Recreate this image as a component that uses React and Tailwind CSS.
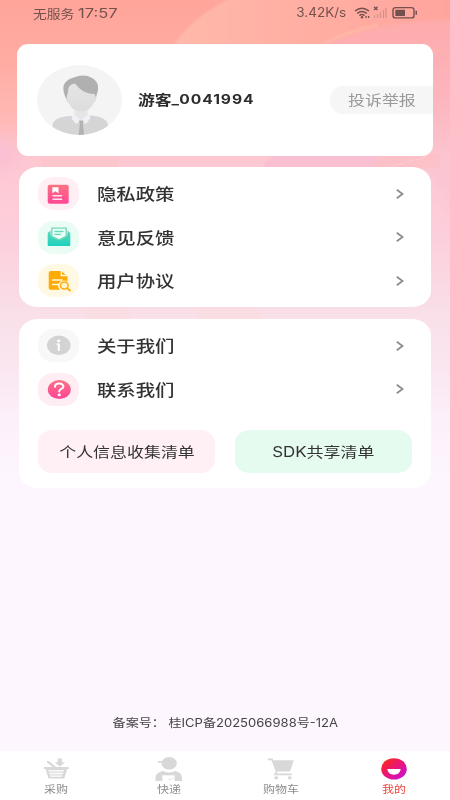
import React from 'react';

const menuTop = [
  { label: '隐私政策', icon: 'book', bubble: 'bg-[#ffeff5]' },
  { label: '意见反馈', icon: 'mail', bubble: 'bg-[#ebfcf4]' },
  { label: '用户协议', icon: 'doc', bubble: 'bg-[#fff9e4]' },
];

const menuBottom = [
  { label: '关于我们', icon: 'info', bubble: 'bg-[#f8f8f8]' },
  { label: '联系我们', icon: 'help', bubble: 'bg-[#ffedf4]' },
];

const tabs = [
  { label: '采购', icon: 'basket' },
  { label: '快递', icon: 'courier' },
  { label: '购物车', icon: 'cart' },
  { label: '我的', icon: 'mine', active: true },
];

const Backdrop = () => (
  <svg className="absolute inset-0 -z-10 h-full w-full" viewBox="0 0 450 800" preserveAspectRatio="none">
    <defs>
      <linearGradient id="sky" x1="0" y1="0" x2="0" y2="1">
        <stop offset="0" stopColor="#ffa59a" />
        <stop offset="0.08" stopColor="#ffaca3" />
        <stop offset="0.15" stopColor="#ffb9b6" />
        <stop offset="0.2" stopColor="#fec8d2" />
        <stop offset="0.3" stopColor="#fccfdc" />
        <stop offset="0.39" stopColor="#f9dfe8" />
        <stop offset="0.46" stopColor="#fae6f0" />
        <stop offset="0.53" stopColor="#fcf1fb" />
        <stop offset="0.6" stopColor="#fdf6ff" />
        <stop offset="1" stopColor="#fdf6ff" />
      </linearGradient>
      <linearGradient id="arc" x1="0" y1="0" x2="1" y2="0">
        <stop offset="0" stopColor="#ffb9aa" />
        <stop offset="0.5" stopColor="#ffaea2" />
        <stop offset="1" stopColor="#ffa59e" />
      </linearGradient>
      <linearGradient id="swell" x1="0" y1="0" x2="0" y2="1">
        <stop offset="0" stopColor="#feabab" />
        <stop offset="0.35" stopColor="#fdb5bd" />
        <stop offset="0.65" stopColor="#fcc6d0" />
        <stop offset="1" stopColor="#fcd2dc" stopOpacity="0" />
      </linearGradient>
      <filter id="soft" x="-50%" y="-100%" width="200%" height="300%">
        <feGaussianBlur stdDeviation="7" />
      </filter>
      <filter id="edge" x="-10%" y="-10%" width="120%" height="120%">
        <feGaussianBlur stdDeviation="1.2" />
      </filter>
    </defs>
    <rect width="450" height="800" fill="url(#sky)" />
    <path d="M173 46 Q194 16 232 -3 H455 V46 Z" fill="url(#arc)" filter="url(#edge)" />
    <path d="M322 46 Q375 21 455 19 V240 H322 Z" fill="url(#swell)" filter="url(#edge)" />
    <path d="M322 45 Q345 32 378 25" fill="none" stroke="#ffc3ae" strokeWidth="2.500" opacity="0.600" filter="url(#edge)" />
    <ellipse cx="2" cy="154" rx="15" ry="16" fill="#fbbfd3" filter="url(#soft)" />
    <path d="M40 168 L46 154 H118 V168Z" fill="#fdc6cd" filter="url(#edge)" />
    <path d="M262 168 Q266 160 275 154 H380 V168Z" fill="#fabfd1" filter="url(#edge)" />
    <path d="M374 168 Q378 160 385 154 H440 V168Z" fill="#fdc0c7" filter="url(#edge)" />
    <path d="M392 166 L426 157" stroke="#ffd5d8" strokeWidth="0.700" opacity="0.700" />
    <path d="M436 170 Q443 200 455 225 V160 H436Z" fill="#fbc5d3" filter="url(#soft)" />
    <path d="M80 306 H136 L128 320 H86Z M196 306 H262 V320 H196Z" fill="#fadde0" opacity="0.500" filter="url(#edge)" />
  </svg>
);

const BubbleIcon = ({ name }) => {
  const grad = (id, from, to) => (
    <defs>
      <linearGradient id={id} x1="0" y1="0" x2="0" y2="1">
        <stop offset="0" stopColor={from} />
        <stop offset="1" stopColor={to} />
      </linearGradient>
    </defs>
  );
  if (name === 'book') {
    return (
      <svg className="h-[33px] w-[41px]" viewBox="0 0 41 33">
        {grad('bookFill', '#fb7380', '#ff4796')}
        <rect x="9.700" y="7.700" width="21" height="19" rx="2" fill="url(#bookFill)" />
        <path d="M14.300 10.200h6.200v6l-3.100-2-3.100 2z" fill="#fff" />
        <path d="M15 18.800h8.600M15 22.300h8.600" stroke="#ffe3ec" strokeWidth="1.400" strokeLinecap="round" />
      </svg>
    );
  }
  if (name === 'mail') {
    return (
      <svg className="h-[33px] w-[41px]" viewBox="0 0 41 33">
        {grad('mailFill', '#5fd9b8', '#1dd0bf')}
        <path d="M9.700 12 12.600 9.500v4l8.400 4.500 8.400-4.500v-4l2.900 2.500v12.200q0 .8-.8.8H10.500q-.8 0-.8-.8z" fill="url(#mailFill)" />
        <path d="M13.800 7.200h14.400v8.200L21 18.800l-7.200-3.400z" fill="#eafff8" stroke="#74d9b8" strokeWidth="1.300" />
        <path d="M17 10.500h8M17 13.400h5.500" stroke="#67d9ba" strokeWidth="1.300" strokeLinecap="round" />
      </svg>
    );
  }
  if (name === 'doc') {
    return (
      <svg className="h-[33px] w-[41px]" viewBox="0 0 41 33">
        <path d="M12.700 7h10.500l6.300 5.200V24q0 1.800-2 1.800H12.700q-2 0-2-1.800V9q0-2 2-2z" fill="#feac05" />
        <path d="M23.300 6.500v5h6.500" fill="none" stroke="#fff8e2" strokeWidth="1.300" />
        <path d="M14.800 16h9M14.800 20.500h5.500" stroke="#fff8e2" strokeWidth="1.700" strokeLinecap="round" />
        <ellipse cx="26" cy="21.800" rx="6" ry="5.200" fill="#fff8e2" />
        <ellipse cx="26.300" cy="21.500" rx="3.900" ry="3.400" fill="#fff3cf" stroke="#feac05" strokeWidth="1.500" />
        <path d="m29.200 24.200 2.900 2.300" stroke="#feac05" strokeWidth="1.800" strokeLinecap="round" />
      </svg>
    );
  }
  if (name === 'info') {
    return (
      <svg className="h-[33px] w-[41px]" viewBox="0 0 41 33">
        <ellipse cx="20.800" cy="16.300" rx="11.800" ry="9.700" fill="#d3d3d3" />
        <ellipse cx="20.700" cy="11.900" rx="1.600" ry="1.300" fill="#fff" />
        <path d="M19.600 15.300h1.200v5.800" fill="none" stroke="#fff" strokeWidth="2.200" strokeLinecap="round" strokeLinejoin="round" />
      </svg>
    );
  }
  return (
    <svg className="h-[33px] w-[41px]" viewBox="0 0 41 33">
      {grad('helpFill', '#fa7284', '#ff4499')}
      <ellipse cx="21.300" cy="16.600" rx="11.500" ry="9.500" fill="url(#helpFill)" />
      <path d="M17 13.800c.2-4.400 8.600-4.200 8.400-.2-.1 2.500-4.200 2.200-4.200 4.800" fill="none" stroke="#fff" strokeWidth="2" strokeLinecap="round" />
      <ellipse cx="21.200" cy="21.900" rx="1.600" ry="1.300" fill="#fff" />
    </svg>
  );
};

const TabIcon = ({ name }) => {
  if (name === 'basket') {
    return (
      <svg className="h-6 w-7" viewBox="0 0 28 24">
        <path d="M6 4.800 13 10.500" stroke="#d8d8d8" strokeWidth="2.200" strokeLinecap="round" />
        <path d="M15.700 1.500h4.200v3.800H23L17.800 9.500l-5.200-4.200h3.100z" fill="#d8d8d8" />
        <path d="M1.800 10h25v2h-1.600L22.300 21.500H6.500L3.500 12H1.800z" fill="#d8d8d8" />
        <path d="M6.500 13.800h15.500M7.500 16.500h13.500M8.300 19.100h11.800" stroke="#fff" strokeWidth="1.300" />
      </svg>
    );
  }
  if (name === 'courier') {
    return (
      <svg className="h-6 w-7" viewBox="0 0 28 24">
        <ellipse cx="14.200" cy="6.300" rx="7.600" ry="6.300" fill="#d8d8d8" />
        <path d="M2.700 4h6v1.800h-5q-1 0-1-1.800z" fill="#d8d8d8" />
        <path d="M.5 24v-3.500q0-5 7.500-6.500 6 3.200 12 0 7 1.500 7 6.500V24z" fill="#d8d8d8" />
        <path d="M7.300 18.300h12.400V24H7.300z" fill="#fff" />
        <path d="M13.800 22.700h2.500M17.500 21.300h1" stroke="#d8d8d8" strokeWidth="1" />
      </svg>
    );
  }
  if (name === 'cart') {
    return (
      <svg className="h-6 w-7" viewBox="0 0 28 24">
        <path d="M.8 2.400h4.200L9.700 14.800 8 17.400h16.500" fill="none" stroke="#d8d8d8" strokeWidth="1.700" />
        <path d="M6 3.300H26.800l-3.500 10.400Q22.900 14.600 21.500 14.600H10z" fill="#d8d8d8" />
        <ellipse cx="9.200" cy="20.800" rx="2" ry="1.600" fill="#d8d8d8" />
        <ellipse cx="22.700" cy="20.800" rx="2" ry="1.600" fill="#d8d8d8" />
      </svg>
    );
  }
  return (
    <svg className="h-6 w-7" viewBox="0 0 28 24">
      <defs>
        <linearGradient id="mineFill" x1="0.100" y1="0.100" x2="0.900" y2="0.900">
          <stop offset="0" stopColor="#fb2a1c" />
          <stop offset="0.500" stopColor="#ea157a" />
          <stop offset="1" stopColor="#c912cf" />
        </linearGradient>
      </defs>
      <ellipse cx="14" cy="11.900" rx="12.800" ry="10.700" fill="url(#mineFill)" />
      <path d="M7.300 12h13.400q-.5 5.700-6.700 5.700T7.300 12z" fill="#fff" />
    </svg>
  );
};

const Avatar = () => (
  <svg className="h-[70px] w-[85px] shrink-0" viewBox="0 0 85 70">
    <defs>
      <clipPath id="avatarClip">
        <ellipse cx="42.500" cy="35" rx="42.500" ry="35" />
      </clipPath>
      <linearGradient id="face" x1="0" y1="0" x2="0" y2="1">
        <stop offset="0" stopColor="#e5e5e5" />
        <stop offset="1" stopColor="#dcdcdc" />
      </linearGradient>
    </defs>
    <g clipPath="url(#avatarClip)">
      <rect width="85" height="70" fill="#f4f4f4" />
      <path d="M15.500 70V60q1-8 18-9l10 2 11-2.500Q70 52 71 60v10z" fill="#d5d5d5" />
      <path d="M37.500 44h13v6l-6.500 6-6.500-6z" fill="#e6e6e6" />
      <path d="M36.500 49.500l7.500 5.500 7.500-5.500 2 3.500-4.500 6-5-3.500-5 3.500-4.500-5.500z" fill="#f0f0f7" />
      <path d="M42 55.500h4.500l-.7 3 1.300 11.500h-5.500l1.300-11.500z" fill="#b2b2b2" />
      <path d="M30 31q-2 0-1 3.500t3 4zM58 31q2 0 1 3.500t-3 4z" fill="#dedede" />
      <path d="M30.500 18H58v16q-3 12-14 12.200Q33 46 30.500 34z" fill="url(#face)" />
      <path d="M29.500 34Q25.500 27 26.500 21q1.500-6 10-8.500 11-4 18.500.5 7 3.500 6 12l-2 7.500-1.500-3.500Q46 29.500 38 18.500q-7 .5-7 8z" fill="#b0b0b0" />
    </g>
  </svg>
);

const MenuRow = ({ item }) => (
  <div className="flex h-[43.500px] items-center">
    <div className={`h-[33px] w-[41px] rounded-[16px/14px] ${item.bubble}`}>
      <BubbleIcon name={item.icon} />
    </div>
    <span className="ml-[17.500px] origin-left scale-x-[1.210] pt-px text-[16px] leading-none font-medium text-[#333]">{item.label}</span>
    <svg className="mr-[27px] ml-auto h-[10px] w-[8px]" viewBox="0 0 8 10">
      <path d="M.8.700 6.600 5 .8 9.300" fill="none" stroke="#8a8a8a" strokeWidth="1.700" />
    </svg>
  </div>
);

const StatusBar = () => (
  <header className="flex h-[26px] items-center pr-[32px] pl-[33px] text-[#75504e]">
    <span className="w-[45px]">
      <span className="inline-block origin-left scale-x-[1.150] text-[12px] leading-none">无服务</span>
    </span>
    <span className="inline-block origin-left scale-x-[1.270] text-[13px] leading-none">17:57</span>
    <span className="ml-auto inline-block origin-right scale-x-[1.080] pt-px text-[12.500px] leading-none">3.42K/s</span>
    <svg className="ml-[8px] h-[14px] w-[64px]" viewBox="0 0 64 14">
      <g fill="none" stroke="currentColor" strokeWidth="1.500">
        <path d="M1 5q7-5.500 14 0M3.200 7.300q4.800-3.700 9.600 0M5.400 9.600q2.600-2 5.200 0" />
        <path d="M20 .8l3.500 3.200M23.500 .8 20 4" strokeWidth="1.300" />
        <rect x="39" y="1.600" width="21" height="10.300" rx="2.500" strokeWidth="1.400" />
      </g>
      <circle cx="8" cy="11.300" r="1.200" fill="currentColor" />
      <path d="M11.500 10h1.300v2h-1.300zM14 10h1.300v2H14zM41.300 3.700h9.700v6.200h-9.700zM61.500 4.800h1.500v4h-1.500z" fill="currentColor" />
      <path d="M20.500 9.500v2.500M23.500 8v4M26.500 6v6M29.500 4v8M32 2v10" stroke="#d08f88" strokeWidth="1.200" />
    </svg>
  </header>
);

const App = () => {
  return (
    <div className="relative isolate flex h-[800px] w-[450px] flex-col overflow-hidden font-['Inter','Noto_Sans_CJK_SC',sans-serif]">
      <Backdrop />
      <StatusBar />

      {/* Profile */}
      <section className="mt-[18px] ml-[17px] flex h-[111.500px] w-[416px] items-center overflow-hidden rounded-[11px] bg-white pl-[20px]">
        <Avatar />
        <span className="ml-[16px] flex origin-left scale-x-[1.200] items-center text-[14px] leading-none font-bold whitespace-nowrap text-[#2d2d2d]">
          游客<span className="text-[13px] tracking-[0.800px]">_0041994</span>
        </span>
        <div className="ml-auto flex h-[28px] w-[103px] shrink-0 items-center rounded-l-[13px] bg-[#f6f6f6] pl-[18px]">
          <span className="origin-left scale-x-[1.210] pt-px text-[14px] leading-none text-[#999]">投诉举报</span>
        </div>
      </section>

      {/* Menus */}
      <section className="mt-[11.500px] ml-[19px] h-[140px] w-[412px] rounded-[19px/16px] bg-white pt-[5px] pl-[19px]">
        {menuTop.map((item) => (
          <MenuRow key={item.label} item={item} />
        ))}
      </section>

      <section className="mt-[12px] ml-[19px] h-[169px] w-[412px] rounded-[19px/16px] bg-white pt-[5px] pl-[19px]">
        {menuBottom.map((item) => (
          <MenuRow key={item.label} item={item} />
        ))}
        <div className="mt-[19px] flex gap-5">
          <button className="flex h-[43px] w-[177px] items-center justify-center rounded-[15px/13px] bg-[#fff0f5]">
            <span className="scale-x-[1.210] text-[14px] leading-none whitespace-nowrap text-[#333]">个人信息收集清单</span>
          </button>
          <button className="flex h-[43px] w-[177px] items-center justify-center rounded-[15px/13px] bg-[#e6fbef]">
            <span className="scale-x-[1.210] text-[14px] leading-none whitespace-nowrap text-[#333]">SDK共享清单</span>
          </button>
        </div>
      </section>

      <p className="mt-auto mb-[21px] text-center text-[11.500px] leading-[14px] text-[#444]">
        <span className="inline-block scale-x-[1.135]">备案号： 桂ICP备2025066988号-12A</span>
      </p>

      {/* Tab bar */}
      <nav className="grid h-[49px] grid-cols-4 bg-white pt-[6px]">
        {tabs.map((tab) => (
          <div key={tab.label} className="flex flex-col items-center">
            <TabIcon name={tab.icon} />
            <span className={`mt-[3px] scale-x-[1.200] text-[10px] leading-none ${tab.active ? 'text-[#f0453a]' : 'text-[#8c8c8c]'}`}>
              {tab.label}
            </span>
          </div>
        ))}
      </nav>
    </div>
  );
};

export default App;
